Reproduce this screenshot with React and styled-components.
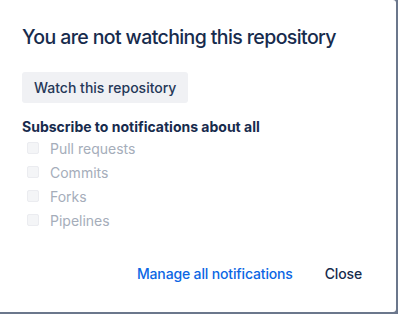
import React from "react";
import styled, { createGlobalStyle } from "styled-components";

const GlobalStyle = createGlobalStyle`
  html, body {
    margin: 0;
    padding: 0;
    background: #6b778c;
  }
  body {
    font-family: Inter, "Noto Sans", "Liberation Sans", sans-serif;
    -webkit-font-smoothing: antialiased;
  }
`;

const Dialog = styled.div`
  box-sizing: border-box;
  width: 396px;
  height: 312px;
  background: #ffffff;
  border-radius: 0 3px 3px 0;
  padding: 25px 22px 0 22px;
  display: flex;
  flex-direction: column;
`;

const Title = styled.h1`
  margin: 0;
  font-size: 19.5px;
  line-height: 24px;
  font-weight: 500;
  color: #172b4d;
  letter-spacing: -0.6px;
`;

const WatchButton = styled.button`
  align-self: flex-start;
  margin-top: 23px;
  height: 31px;
  padding: 0 12px;
  border: none;
  border-radius: 3px;
  background: #f0f1f4;
  color: #253858;
  font-family: inherit;
  font-size: 14px;
  font-weight: 500;
  cursor: pointer;
`;

const SectionLabel = styled.div`
  margin-top: 14px;
  font-size: 14px;
  line-height: 20px;
  font-weight: 700;
  color: #172b4d;
`;

const OptionList = styled.div`
  display: flex;
  flex-direction: column;
  margin-top: -1px;
`;

const OptionRow = styled.label`
  display: flex;
  align-items: center;
  height: 24px;
  padding-left: 5px;
  font-size: 14px;
  color: #a5adba;
`;

const Box = styled.span`
  box-sizing: border-box;
  width: 12px;
  height: 12px;
  margin-right: 11px;
  border-radius: 2px;
  background: #f4f5f7;
  border: 1px solid #ebecf0;
`;

const Footer = styled.div`
  margin-top: auto;
  margin-bottom: 23px;
  display: flex;
  justify-content: flex-end;
  align-items: center;
  gap: 8px;
`;

const FooterButton = styled.button`
  height: 32px;
  padding: 0 12px;
  border: none;
  background: transparent;
  font-family: inherit;
  font-size: 14px;
  font-weight: 500;
  letter-spacing: -0.15px;
  color: ${(p) => (p.$link ? "#0c66e4" : "#172b4d")};
  cursor: pointer;
`;

const options = ["Pull requests", "Commits", "Forks", "Pipelines"];

export default function App() {
  return (
    <>
      <GlobalStyle />
      <Dialog>
        <Title>You are not watching this repository</Title>
        <WatchButton>Watch this repository</WatchButton>
        <SectionLabel>Subscribe to notifications about all</SectionLabel>
        <OptionList>
          {options.map((o) => (
            <OptionRow key={o}>
              <Box />
              {o}
            </OptionRow>
          ))}
        </OptionList>
        <Footer>
          <FooterButton $link>Manage all notifications</FooterButton>
          <FooterButton>Close</FooterButton>
        </Footer>
      </Dialog>
    </>
  );
}
